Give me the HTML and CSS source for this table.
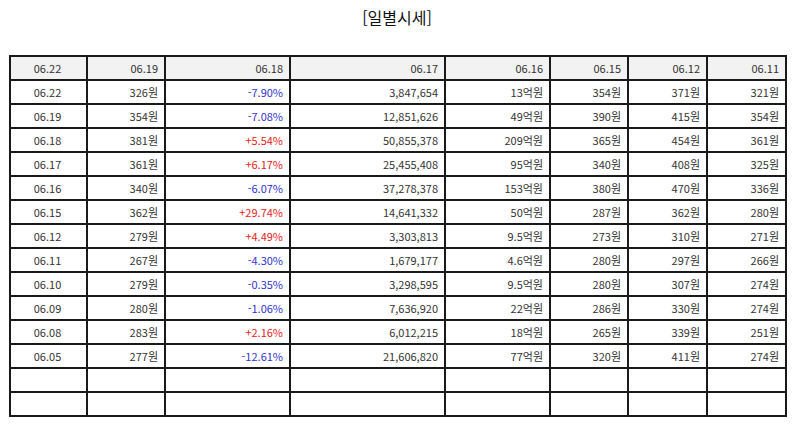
FILE: index.html
```html
<!DOCTYPE html>
<html lang="ko">
<head>
<meta charset="utf-8">
<link rel="stylesheet" href="styles.css">
</head>
<body>
<div class="page">
  <h1 class="title">[일별시세]</h1>
  <table class="grid">
    <colgroup>
      <col class="c1"><col class="c2"><col class="c3"><col class="c4"><col class="c5"><col class="c6"><col class="c7"><col class="c8">
    </colgroup>
    <thead>
      <tr><th class="ctr">06.22</th><th>06.19</th><th>06.18</th><th>06.17</th><th>06.16</th><th>06.15</th><th>06.12</th><th>06.11</th></tr>
    </thead>
    <tbody>
      <tr><td class="ctr">06.22</td><td>326원</td><td class="dn">-7.90%</td><td>3,847,654</td><td>13억원</td><td>354원</td><td>371원</td><td>321원</td></tr>
      <tr><td class="ctr">06.19</td><td>354원</td><td class="dn">-7.08%</td><td>12,851,626</td><td>49억원</td><td>390원</td><td>415원</td><td>354원</td></tr>
      <tr><td class="ctr">06.18</td><td>381원</td><td class="up">+5.54%</td><td>50,855,378</td><td>209억원</td><td>365원</td><td>454원</td><td>361원</td></tr>
      <tr><td class="ctr">06.17</td><td>361원</td><td class="up">+6.17%</td><td>25,455,408</td><td>95억원</td><td>340원</td><td>408원</td><td>325원</td></tr>
      <tr><td class="ctr">06.16</td><td>340원</td><td class="dn">-6.07%</td><td>37,278,378</td><td>153억원</td><td>380원</td><td>470원</td><td>336원</td></tr>
      <tr><td class="ctr">06.15</td><td>362원</td><td class="up">+29.74%</td><td>14,641,332</td><td>50억원</td><td>287원</td><td>362원</td><td>280원</td></tr>
      <tr><td class="ctr">06.12</td><td>279원</td><td class="up">+4.49%</td><td>3,303,813</td><td>9.5억원</td><td>273원</td><td>310원</td><td>271원</td></tr>
      <tr><td class="ctr">06.11</td><td>267원</td><td class="dn">-4.30%</td><td>1,679,177</td><td>4.6억원</td><td>280원</td><td>297원</td><td>266원</td></tr>
      <tr><td class="ctr">06.10</td><td>279원</td><td class="dn">-0.35%</td><td>3,298,595</td><td>9.5억원</td><td>280원</td><td>307원</td><td>274원</td></tr>
      <tr><td class="ctr">06.09</td><td>280원</td><td class="dn">-1.06%</td><td>7,636,920</td><td>22억원</td><td>286원</td><td>330원</td><td>274원</td></tr>
      <tr><td class="ctr">06.08</td><td>283원</td><td class="up">+2.16%</td><td>6,012,215</td><td>18억원</td><td>265원</td><td>339원</td><td>251원</td></tr>
      <tr><td class="ctr">06.05</td><td>277원</td><td class="dn">-12.61%</td><td>21,606,820</td><td>77억원</td><td>320원</td><td>411원</td><td>274원</td></tr>
      <tr><td></td><td></td><td></td><td></td><td></td><td></td><td></td><td></td></tr>
      <tr><td></td><td></td><td></td><td></td><td></td><td></td><td></td><td></td></tr>
    </tbody>
  </table>
</div>
</body>
</html>
```
FILE: styles.css
```css
html, body {
  margin: 0;
  padding: 0;
  background: #fff;
}
body {
  font-family: "Noto Sans CJK KR", "Noto Sans", sans-serif;
  color: #222;
}
.page {
  padding: 6px 9px 0 9px;
}
.title {
  margin: 0 0 27px 0;
  text-align: center;
  font-size: 16px;
  font-weight: normal;
  line-height: 22px;
  color: #111;
}
.grid {
  width: 777px;
  border-collapse: collapse;
  table-layout: fixed;
  font-size: 11px;
}
.c1 { width: 77px; }
.c2 { width: 78px; }
.c3 { width: 125px; }
.c4 { width: 155px; }
.c5 { width: 105px; }
.c6 { width: 78px; }
.c7 { width: 79px; }
.c8 { width: 79px; }
.grid th, .grid td {
  border: 2px solid #1a1a1a;
  height: 22px;
  padding: 0 6px 0 4px;
  text-align: right;
  font-weight: normal;
  line-height: 22px;
  color: #333;
}
.grid th {
  background: #f2f2f2;
}
.grid .ctr {
  text-align: center;
}
.grid .up { color: #e52222; }
.grid .dn { color: #3333cc; }
```
